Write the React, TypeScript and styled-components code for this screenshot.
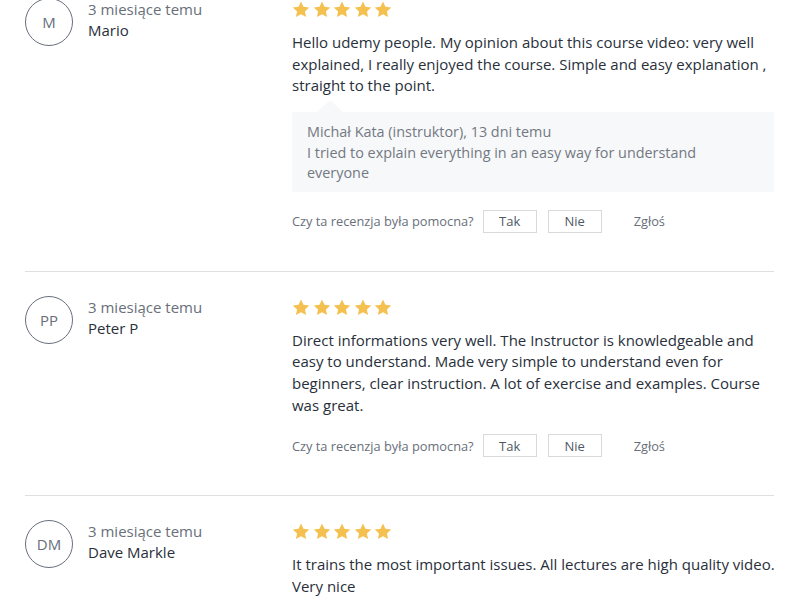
import React from "react";
import styled, { createGlobalStyle } from "styled-components";

const GlobalStyle = createGlobalStyle`
  html, body { margin: 0; padding: 0; background: #fff; }
  body {
    font-family: "Open Sans", "Liberation Sans", sans-serif;
    color: #29303b;
    -webkit-font-smoothing: antialiased;
  }
`;

const Page = styled.div`
  padding: 0 24px 0 25px;
  overflow: hidden;
  height: 610px;
`;

const List = styled.div`
  margin-top: -27px;
`;

const Review = styled.div`
  display: flex;
  border-top: 1px solid #dedfe0;
  padding: 24px 0 38px;
`;

const Left = styled.div`
  display: flex;
  align-items: flex-start;
  gap: 15px;
  width: 267px;
  flex-shrink: 0;
`;

const Avatar = styled.div`
  width: 48px;
  height: 48px;
  box-sizing: border-box;
  border-radius: 50%;
  border: 1px solid #686f7a;
  display: flex;
  align-items: center;
  justify-content: center;
  font-size: 15px;
  color: #686f7a;
  flex-shrink: 0;
`;

const Meta = styled.div`
  display: flex;
  flex-direction: column;
  padding-top: 1px;
  font-size: 15px;
  line-height: 21px;
`;

const DateText = styled.div`
  color: #686f7a;
`;

const Name = styled.div`
  color: #29303b;
`;

const Right = styled.div`
  flex: 1;
  min-width: 0;
  padding-top: 1px;
`;

const Stars = styled.div`
  display: flex;
  align-items: center;
  gap: 2.5px;
  height: 21px;
`;

const Body = styled.p`
  margin: 12px -8px 0 0;
  font-size: 15px;
  line-height: 21.7px;
  color: #29303b;
`;

const ReplyWrap = styled.div`
  position: relative;
  margin-top: 15px;
  background: #f7f8fa;
  padding: 10px 20px 8px 15px;
  font-size: 14.4px;
  line-height: 20.5px;
  color: #737982;

  &::before {
    content: "";
    position: absolute;
    left: 25px;
    top: -12px;
    border-left: 13px solid transparent;
    border-right: 13px solid transparent;
    border-bottom: 12px solid #f7f8fa;
  }
`;

const Helpful = styled.div`
  display: flex;
  align-items: center;
  margin-top: 18px;
  font-size: 12.8px;
  color: #686f7a;
`;

const HelpButton = styled.button<{ $ml: number }>`
  height: 23px;
  width: 54px;
  margin-left: ${(p) => p.$ml}px;
  border: 1px solid #d8d9db;
  background: #fff;
  font-family: "Open Sans", "Liberation Sans", sans-serif;
  font-size: 13px;
  color: #505763;
  padding: 0;
  cursor: pointer;
`;

const Report = styled.span`
  margin-left: 32px;
  color: #686f7a;
`;

const Star = () => (
  <svg width="18" height="17" viewBox="0 0 24 23" aria-hidden="true">
    <path
      d="M12 0.8l3.3 7.1 7.8 0.9-5.8 5.3 1.6 7.7L12 17.9l-6.9 3.9 1.6-7.7L0.9 8.8l7.8-0.9z"
      fill="#f4c150"
    />
  </svg>
);

type ReviewData = {
  initials: string;
  name: string;
  date: string;
  text: string;
  reply?: { author: string; text: string };
};

const reviews: ReviewData[] = [
  {
    initials: "M",
    name: "Mario",
    date: "3 miesiące temu",
    text: "Hello udemy people. My opinion about this course video: very well explained, I really enjoyed the course. Simple and easy explanation , straight to the point.",
    reply: {
      author: "Michał Kata (instruktor), 13 dni temu",
      text: "I tried to explain everything in an easy way for understand everyone",
    },
  },
  {
    initials: "PP",
    name: "Peter P",
    date: "3 miesiące temu",
    text: "Direct informations very well. The Instructor is knowledgeable and easy to understand. Made very simple to understand even for beginners, clear instruction. A lot of exercise and examples. Course was great.",
  },
  {
    initials: "DM",
    name: "Dave Markle",
    date: "3 miesiące temu",
    text: "It trains the most important issues. All lectures are high quality video. Very nice",
  },
];

export default function App() {
  return (
    <>
      <GlobalStyle />
      <Page>
        <List>
          {reviews.map((r) => (
            <Review key={r.name}>
              <Left>
                <Avatar>{r.initials}</Avatar>
                <Meta>
                  <DateText>{r.date}</DateText>
                  <Name>{r.name}</Name>
                </Meta>
              </Left>
              <Right>
                <Stars>
                  {[0, 1, 2, 3, 4].map((i) => (
                    <Star key={i} />
                  ))}
                </Stars>
                <Body>{r.text}</Body>
                {r.reply && (
                  <ReplyWrap>
                    <div>{r.reply.author}</div>
                    <div>{r.reply.text}</div>
                  </ReplyWrap>
                )}
                <Helpful>
                  <span>Czy ta recenzja była pomocna?</span>
                  <HelpButton $ml={9}>Tak</HelpButton>
                  <HelpButton $ml={11}>Nie</HelpButton>
                  <Report>Zgłoś</Report>
                </Helpful>
              </Right>
            </Review>
          ))}
        </List>
      </Page>
    </>
  );
}
